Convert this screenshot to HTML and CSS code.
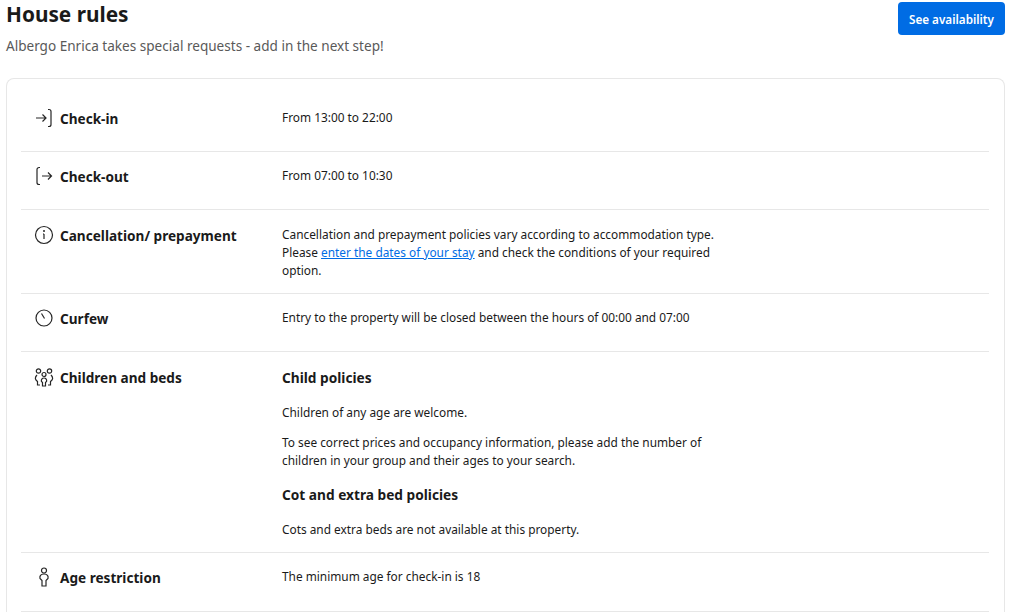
FILE: index.html
```html
<!DOCTYPE html>
<html lang="en">
<head>
<meta charset="utf-8">
<title>House rules</title>
<link rel="stylesheet" href="styles.css">
</head>
<body>
<main class="page">
  <header class="head">
    <div>
      <h2 class="title">House rules</h2>
      <p class="sub">Albergo Enrica takes special requests - add in the next step!</p>
    </div>
    <a class="btn" href="#">See availability</a>
  </header>
  <section class="card">
    <div class="row row-first">
      <div class="label">
        <svg class="icon" viewBox="0 0 20 20"><path d="M2 10h10M8.500 6.500 12 10l-3.500 3.500M14 1.500h1a2 2 0 0 1 2 2v13a2 2 0 0 1-2 2h-1"/></svg>
        <span>Check-in</span>
      </div>
      <div class="value"><p>From 13:00 to 22:00</p></div>
    </div>
    <div class="row">
      <div class="label">
        <svg class="icon" viewBox="0 0 20 20"><path d="M8 10h9.500M14 6.500l3.500 3.500-3.500 3.500M6 1.500H5a2 2 0 0 0-2 2v13a2 2 0 0 0 2 2h1"/></svg>
        <span>Check-out</span>
      </div>
      <div class="value"><p>From 07:00 to 10:30</p></div>
    </div>
    <div class="row row-low">
      <div class="label">
        <svg class="icon" viewBox="0 0 20 20"><circle cx="10" cy="10" r="8.500"/><path d="M10 9v5M9 9h1"/><circle class="dot" cx="10" cy="6" r="1"/></svg>
        <span>Cancellation/ prepayment</span>
      </div>
      <div class="value"><p>Cancellation and prepayment policies vary according to accommodation type. Please <a href="#">enter the dates of your stay</a> and check the conditions of your required option.</p></div>
    </div>
    <div class="row">
      <div class="label">
        <svg class="icon" viewBox="0 0 20 20"><circle cx="10" cy="10" r="8"/><path d="M7.500 5.500 10.500 10.500"/></svg>
        <span>Curfew</span>
      </div>
      <div class="value"><p>Entry to the property will be closed between the hours of 00:00 and 07:00</p></div>
    </div>
    <div class="row row-low">
      <div class="label">
        <svg class="icon" viewBox="0 0 20 20"><circle cx="4.500" cy="4" r="2.200"/><circle cx="15.500" cy="4" r="2.200"/><circle cx="10" cy="7.500" r="2"/><path d="M3 8C1.500 9.500 1 11.500 2 13l1.500 1.500V18H6M17 8c1.500 1.500 2 3.500 1 5l-1.500 1.500V18H14M10 11c-2 0-3 2-2.500 3.500l1 1V19h3v-3.500l1-1C13 13 12 11 10 11Z"/></svg>
        <span>Children and beds</span>
      </div>
      <div class="value">
        <h3 class="h">Child policies</h3>
        <p class="gap">Children of any age are welcome.</p>
        <p class="gap2">To see correct prices and occupancy information, please add the number of children in your group and their ages to your search.</p>
        <h3 class="h h2">Cot and extra bed policies</h3>
        <p class="gap">Cots and extra beds are not available at this property.</p>
      </div>
    </div>
    <div class="row row-last">
      <div class="label">
        <svg class="icon" viewBox="0 0 20 20"><circle cx="10" cy="3.500" r="2.500"/><path d="M10 7C6.500 7 5.500 9 6 11.500L8 13.500V19h4v-5.500l2-2C14.500 9 13.500 7 10 7Z"/></svg>
        <span>Age restriction</span>
      </div>
      <div class="value"><p>The minimum age for check-in is 18</p></div>
    </div>
  </section>
</main>
</body>
</html>
```
FILE: styles.css
```css
html, body {
  margin: 0;
  padding: 0;
  height: 615px;
  overflow: hidden;
  background: #fff;
}
body {
  font-family: "Noto Sans", "Open Sans", sans-serif;
  color: #1a1a1a;
}
.page {
  padding: 0 17px 0 6px;
}
.head {
  display: flex;
  justify-content: space-between;
  align-items: flex-start;
  height: 78px;
}
.title {
  margin: 0;
  font-size: 20.800px;
  line-height: 28px;
  font-weight: 700;
}
.sub {
  margin: 9px 0 0;
  font-size: 13.570px;
  line-height: 18px;
  color: #595959;
}
.btn {
  margin-top: 2px;
  width: 107px;
  height: 33px;
  display: flex;
  align-items: center;
  justify-content: center;
  background: #006ce4;
  color: #fff;
  border-radius: 4px;
  font-size: 11.700px;
  font-weight: 600;
  text-decoration: none;
}
.card {
  border: 1px solid #e7e7e7;
  border-bottom: 0;
  border-radius: 8px 8px 0 0;
  padding: 16px 15px 0 14px;
}
.row {
  display: flex;
  border-bottom: 1px solid #e7e7e7;
  padding: 14px 0 15px;
}
.row-first {
  padding-top: 13px;
}
.row-low {
  padding: 15px 0 14px;
}
.row-last {
  padding-bottom: 16px;
}
.label {
  width: 261px;
  flex: none;
  min-height: 28px;
  display: flex;
  align-items: flex-start;
  gap: 6px;
  padding-left: 13px;
  box-sizing: border-box;
  font-size: 13.600px;
  line-height: 22px;
  font-weight: 700;
}
.icon {
  width: 20px;
  height: 20px;
  flex: none;
  fill: none;
  stroke: #262626;
  stroke-width: 1.200;
}
.dot {
  fill: #262626;
  stroke: none;
}
.value {
  width: 440px;
  font-size: 11.870px;
  line-height: 18px;
}
.value p {
  margin: 0;
}
.value a {
  color: #006ce4;
}
.h {
  margin: 0;
  font-size: 13.700px;
  line-height: 22px;
  font-weight: 700;
}
.h2 {
  margin-top: 15px;
}
.value .gap {
  margin-top: 14px;
}
.value .gap2 {
  margin-top: 12px;
}
```
